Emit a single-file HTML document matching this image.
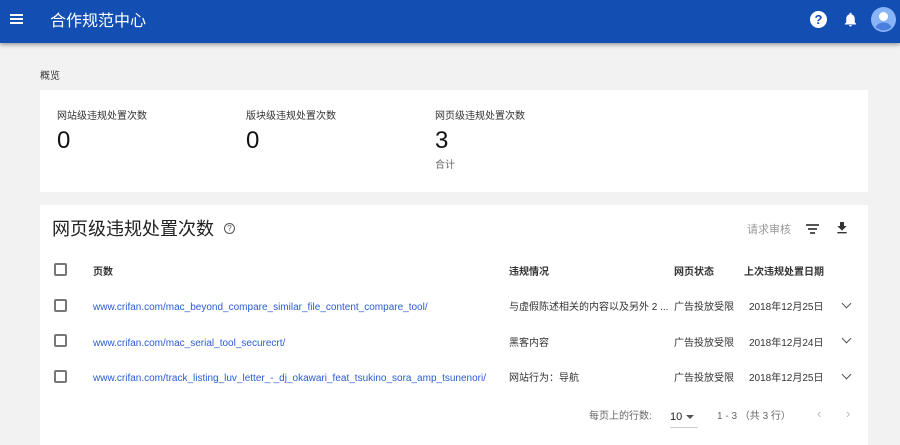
<!DOCTYPE html>
<html><head><meta charset="utf-8"><style>
*{margin:0;padding:0;box-sizing:border-box}
body{width:900px;height:435px;overflow:hidden;background:#f2f2f2;font-family:"Liberation Sans","Noto Sans CJK SC",sans-serif;color:#212121;position:relative}
.hdr{position:absolute;left:0;top:0;width:900px;height:43px;background:#134eb3;box-shadow:0 2px 4px rgba(0,0,0,.35)}
.abs{position:absolute;white-space:nowrap;line-height:14px}
.card{position:absolute;background:#fff;left:40px;width:828px}
.lbl{font-size:10px;color:#333}
.num{font-size:24px;color:#111;line-height:28px}
.cb{position:absolute;left:54px;width:13px;height:13px;border:2px solid #777;border-radius:2px}
.th{font-size:10px;color:#333;font-weight:bold}
.td{font-size:10px;color:#333}
a{color:#2b5bd6;text-decoration:none;font-size:10px}
.chev{position:absolute;left:843px;width:7px;height:7px;border-right:1.5px solid #555;border-bottom:1.5px solid #555;transform:rotate(45deg)}
</style></head><body>
<div class="hdr">
 <div class="abs" style="left:10px;top:14px;width:13px;height:2px;background:#fff;box-shadow:0 4px 0 #fff,0 8px 0 #fff"></div>
 <div class="abs" style="left:50px;top:12px;font-size:16px;line-height:20px;color:#fff">合作规范中心</div>
 <div class="abs" style="left:810px;top:11px;width:17px;height:17px;border-radius:50%;background:#fff;color:#134eb3;font-weight:bold;font-size:13px;text-align:center;line-height:17px">?</div>
 <svg class="abs" style="left:842px;top:10px" width="17" height="19" viewBox="0 0 24 24"><path fill="#fff" d="M12 22c1.1 0 2-.9 2-2h-4c0 1.1.9 2 2 2zm6-6v-5c0-3.070-1.63-5.64-4.5-6.32V4c0-.83-.67-1.5-1.5-1.5s-1.5.67-1.5 1.5v.68C7.64 5.36 6 7.920 6 11v5l-2 2v1h16v-1l-2-2z"/></svg>
 <svg class="abs" style="left:871px;top:7px" width="25" height="25" viewBox="0 0 25 25"><circle cx="12.5" cy="12.5" r="12.5" fill="#8ab4f8"/><circle cx="12.5" cy="9.5" r="4.5" fill="#fff"/><path d="M4.5 20c2-3.5 5-4.5 8-4.5s6 1 8 4.5a11 11 0 0 1-16 0z" fill="#4a7fe0"/></svg>
</div>
<div class="abs lbl" style="left:40px;top:70px">概览</div>
<div class="card" style="top:90px;height:102px">
 <div class="abs lbl" style="left:17px;top:20px">网站级违规处置次数</div>
 <div class="abs num" style="left:17px;top:37px">0</div>
 <div class="abs lbl" style="left:206px;top:20px">版块级违规处置次数</div>
 <div class="abs num" style="left:206px;top:37px">0</div>
 <div class="abs lbl" style="left:395px;top:20px">网页级违规处置次数</div>
 <div class="abs num" style="left:395px;top:37px">3</div>
 <div class="abs" style="left:395px;top:69px;font-size:10px;color:#666">合计</div>
</div>
<div class="card" style="top:205px;height:240px"></div>
<div class="abs" style="left:52px;top:218px;font-size:18px;line-height:22px;color:#222">网页级违规处置次数</div>
<div class="abs" style="left:224px;top:223px;width:11px;height:11px;border:1.3px solid #555;border-radius:50%;font-size:8px;text-align:center;line-height:9px;color:#555">?</div>
<div class="abs" style="left:747px;top:223px;font-size:11px;color:#999">请求审核</div>
<div class="abs" style="left:806px;top:224px;width:13px;height:1.6px;background:#555"></div>
<div class="abs" style="left:808px;top:228px;width:9px;height:1.6px;background:#555"></div>
<div class="abs" style="left:810px;top:232px;width:5px;height:1.6px;background:#555"></div>
<svg class="abs" style="left:834px;top:220px" width="16" height="16" viewBox="0 0 24 24"><path fill="#333" d="M19 9h-4V3H9v6H5l7 7 7-7zM5 18v2h14v-2H5z"/></svg>
<div class="cb" style="top:263px"></div>
<div class="abs th" style="left:93px;top:266px">页数</div>
<div class="abs th" style="left:509px;top:266px">违规情况</div>
<div class="abs th" style="left:674px;top:266px">网页状态</div>
<div class="abs th" style="left:744px;top:266px">上次违规处置日期</div>
<div class="cb" style="top:299px"></div>
<a class="abs" style="left:93px;top:301px">www.crifan.com/mac_beyond_compare_similar_file_content_compare_tool/</a>
<div class="abs td" style="left:509px;top:301px">与虚假陈述相关的内容以及另外 2 ...</div>
<div class="abs td" style="left:674px;top:301px">广告投放受限</div>
<div class="abs td" style="left:749px;top:301px">2018年12月25日</div>
<div class="chev" style="top:300px"></div>
<div class="cb" style="top:334px"></div>
<a class="abs" style="left:93px;top:337px">www.crifan.com/mac_serial_tool_securecrt/</a>
<div class="abs td" style="left:509px;top:337px">黑客内容</div>
<div class="abs td" style="left:674px;top:337px">广告投放受限</div>
<div class="abs td" style="left:749px;top:337px">2018年12月24日</div>
<div class="chev" style="top:335px"></div>
<div class="cb" style="top:370px"></div>
<a class="abs" style="left:93px;top:372px">www.crifan.com/track_listing_luv_letter_-_dj_okawari_feat_tsukino_sora_amp_tsunenori/</a>
<div class="abs td" style="left:509px;top:372px">网站行为：导航</div>
<div class="abs td" style="left:674px;top:372px">广告投放受限</div>
<div class="abs td" style="left:749px;top:372px">2018年12月25日</div>
<div class="chev" style="top:371px"></div>
<div class="abs" style="left:589px;top:410px;font-size:10px;color:#666">每页上的行数:</div>
<div class="abs" style="left:670px;top:410px;font-size:11px;color:#222">10</div>
<div class="abs" style="left:686px;top:415px;width:0;height:0;border-left:4px solid transparent;border-right:4px solid transparent;border-top:4px solid #555"></div>
<div class="abs" style="left:670px;top:427px;width:28px;height:1px;background:#ccc"></div>
<div class="abs" style="left:717px;top:410px;font-size:10px;color:#666">1 - 3 （共 3 行）</div>
<div class="abs" style="left:817px;top:407px;font-size:13px;color:#bbb">‹</div>
<div class="abs" style="left:846px;top:407px;font-size:13px;color:#bbb">›</div>
</body></html>
